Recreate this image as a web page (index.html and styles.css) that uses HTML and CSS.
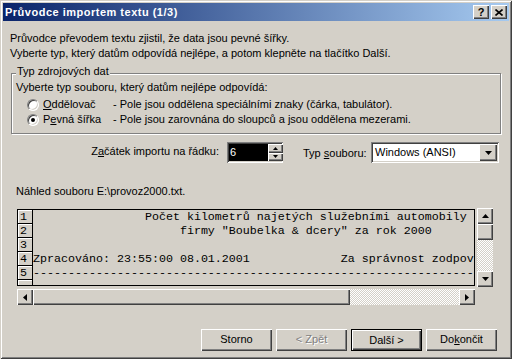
FILE: index.html
```html
<!DOCTYPE html>
<html lang="cs">
<head>
<meta charset="utf-8">
<title>Průvodce importem textu</title>
<link rel="stylesheet" href="styles.css">
</head>
<body>
<div class="window">
  <div class="titlebar">
    <span class="title">Průvodce importem textu (1/3)</span>
    <div class="tb-buttons">
      <span class="tb-btn raised">?</span>
      <span class="tb-btn raised"><svg width="8" height="7" viewBox="0 0 8 7"><path d="M0.5 0.5 L7.5 6.5 M7.5 0.5 L0.5 6.5" stroke="#000" stroke-width="1.6" fill="none"/></svg></span>
    </div>
  </div>
  <div class="content">
    <p class="intro">Průvodce převodem textu zjistil, že data jsou pevné šířky.<br>Vyberte typ, který datům odpovídá nejlépe, a potom klepněte na tlačítko Další.</p>
    <div class="group">
      <span class="legend">Typ zdrojových dat</span>
      <div class="hint">Vyberte typ souboru, který datům nejlépe odpovídá:</div>
      <div class="radio-row first">
        <span class="radio"></span>
        <span class="rlabel"><u>O</u>ddělovač</span>
        <span class="rdesc">- Pole jsou oddělena speciálními znaky (čárka, tabulátor).</span>
      </div>
      <div class="radio-row">
        <span class="radio checked"></span>
        <span class="rlabel">P<u>e</u>vná šířka</span>
        <span class="rdesc">- Pole jsou zarovnána do sloupců a jsou oddělena mezerami.</span>
      </div>
    </div>
    <div class="start-row">
      <span class="start-label">Z<u>a</u>čátek importu na řádku:</span>
      <div class="spin sunken">
        <span class="spin-edit">6</span>
        <div class="spin-btns">
          <span class="spin-btn raised"><svg width="5" height="3" viewBox="0 0 5 3"><path d="M2.5 0 L5 3 L0 3 Z" fill="#000"/></svg></span>
          <span class="spin-btn raised"><svg width="5" height="3" viewBox="0 0 5 3"><path d="M0 0 L5 0 L2.5 3 Z" fill="#000"/></svg></span>
        </div>
      </div>
      <span class="type-label">Typ <u>s</u>ouboru:</span>
      <div class="combo sunken">
        <span class="combo-val">Windows (ANSI)</span>
        <span class="combo-btn raised"><svg width="7" height="4" viewBox="0 0 7 4"><path d="M0 0 L7 0 L3.5 4 Z" fill="#000"/></svg></span>
      </div>
    </div>
    <div class="preview-label">Náhled souboru E:\provoz2000.txt.</div>
    <div class="preview">
      <div class="pv-box">
        <div class="pv-row"><span class="pv-num">1</span><span class="pv-text">                Počet kilometrů najetých služebními automobily</span></div>
        <div class="pv-row"><span class="pv-num">2</span><span class="pv-text">                     firmy "Boubelka &amp; dcery" za rok 2000</span></div>
        <div class="pv-row"><span class="pv-num">3</span><span class="pv-text"></span></div>
        <div class="pv-row"><span class="pv-num">4</span><span class="pv-text">Zpracováno: 23:55:00 08.01.2001             Za správnost zodpov</span></div>
        <div class="pv-row"><span class="pv-num">5</span><span class="pv-text">---------------------------------------------------------------</span></div>
        <div class="pv-row"><span class="pv-num"></span><span class="pv-text"></span></div>
      </div>
      <div class="vscroll">
        <span class="sb-btn raised"><svg width="7" height="4" viewBox="0 0 7 4"><path d="M3.5 0 L7 4 L0 4 Z" fill="#000"/></svg></span>
        <span class="sb-thumb-v raised"></span>
        <span class="sb-track"></span>
        <span class="sb-btn raised"><svg width="7" height="4" viewBox="0 0 7 4"><path d="M0 0 L7 0 L3.5 4 Z" fill="#000"/></svg></span>
      </div>
      <div class="hscroll">
        <span class="sb-btn raised"><svg width="4" height="7" viewBox="0 0 4 7"><path d="M0 3.5 L4 0 L4 7 Z" fill="#000"/></svg></span>
        <span class="sb-thumb-h raised"></span>
        <span class="sb-track"></span>
        <span class="sb-btn raised"><svg width="4" height="7" viewBox="0 0 4 7"><path d="M0 0 L4 3.5 L0 7 Z" fill="#000"/></svg></span>
      </div>
    </div>
    <div class="buttons">
      <span class="btn raised">Storno</span>
      <span class="btn raised disabled">&lt; Zpět</span>
      <span class="btn raised default">Další &gt;</span>
      <span class="btn raised">Do<u>k</u>ončit</span>
    </div>
  </div>
</div>
</body>
</html>
```
FILE: styles.css
```css
* { box-sizing: border-box; }
html, body { margin: 0; padding: 0; background: #d4d0c8; }
body {
  font-family: "Liberation Sans", Arial, sans-serif;
  font-size: 11px;
  color: #000;
}
u { text-decoration: underline; text-underline-offset: 1px; }

.window {
  width: 512px;
  height: 359px;
  background: #d4d0c8;
  padding: 3px;
  display: flex;
  flex-direction: column;
  box-shadow: inset 1px 1px 0 #d4d0c8, inset -1px -1px 0 #404040,
              inset 2px 2px 0 #ffffff, inset -2px -2px 0 #808080;
}

.raised {
  box-shadow: inset 1px 1px 0 #ffffff, inset -1px -1px 0 #404040,
              inset -2px -2px 0 #808080;
  background: #d4d0c8;
}
.sunken {
  box-shadow: inset 1px 1px 0 #808080, inset -1px -1px 0 #ffffff,
              inset 2px 2px 0 #404040, inset -2px -2px 0 #d4d0c8;
}

.titlebar {
  height: 18px;
  flex: none;
  display: flex;
  align-items: center;
  justify-content: space-between;
  padding: 0 2px;
  background: linear-gradient(to right, #0a246a, #a6caf0);
}
.title { color: #fff; font-weight: bold; line-height: 18px; letter-spacing: 0.5px; }
.tb-buttons { display: flex; gap: 2px; }
.tb-btn {
  width: 16px;
  height: 14px;
  display: flex;
  align-items: center;
  justify-content: center;
  font-weight: bold;
  font-size: 11px;
  line-height: 14px;
}

.content { flex: 1; }

.intro { margin: 10px 0 0 7px; line-height: 15px; }

.group {
  position: relative;
  margin: 12px 0 0 8px;
  width: 490px;
  height: 61px;
  border: 1px solid #808080;
  box-shadow: 1px 1px 0 #fff, inset 1px 1px 0 #fff;
  padding: 6px 0 0 4px;
}
.legend {
  position: absolute;
  left: 4px;
  top: -9px;
  padding: 0 1px;
  background: #d4d0c8;
  line-height: 13px;
}
.hint { line-height: 15px; }
.radio-row {
  display: flex;
  align-items: center;
  height: 15px;
  line-height: 15px;
  margin-left: 11px;
}
.radio-row.first { margin-top: 2px; }
.radio {
  width: 12px;
  height: 12px;
  flex: none;
  border-radius: 50%;
  margin-right: 4px;
  background: #fff;
  border: 1px solid;
  border-color: #808080 #ffffff #ffffff #808080;
  box-shadow: inset 1px 1px 0 #404040, inset -1px -1px 0 #d4d0c8;
  display: flex;
  align-items: center;
  justify-content: center;
}
.radio.checked::after {
  content: "";
  width: 4px;
  height: 4px;
  border-radius: 50%;
  background: #000;
}
.rlabel { width: 70px; flex: none; }

.start-row {
  display: flex;
  align-items: flex-start;
  margin: 8px 0 0 8px;
  height: 21px;
}
.start-label { width: 208px; text-align: right; margin-top: 2px; line-height: 15px; }
.spin {
  margin-left: 8px;
  width: 56px;
  height: 21px;
  padding: 2px 0 2px 2px;
  display: flex;
  background: #fff;
}
.spin-edit {
  flex: 1;
  background: #000;
  color: #fff;
  padding-left: 1px;
  line-height: 17px;
}
.spin-btns { width: 15px; display: flex; flex-direction: column; }
.spin-btn {
  flex: 1;
  display: flex;
  align-items: center;
  justify-content: center;
}
.type-label { margin-left: 20px; width: 68px; margin-top: 4px; line-height: 15px; }
.combo {
  width: 128px;
  height: 21px;
  padding: 2px;
  display: flex;
  background: #fff;
}
.combo-val { flex: 1; line-height: 17px; padding-left: 2px; }
.combo-btn {
  width: 18px;
  display: flex;
  align-items: center;
  justify-content: center;
}

.preview-label { margin: 21px 0 0 13px; line-height: 15px; }

.preview {
  display: grid;
  grid-template-columns: 458px 16px;
  grid-template-rows: 79px 16px;
  column-gap: 2px;
  row-gap: 2px;
  margin: 9px 0 0 14px;
}
.pv-box {
  margin-top: 1px;
  height: 77px;
  border: 1px solid #000;
  overflow: hidden;
  font-family: "Liberation Mono", "Courier New", monospace;
  font-size: 11.67px;
}
.pv-row { display: flex; height: 14px; line-height: 14px; }
.pv-num {
  width: 15px;
  flex: none;
  padding-left: 2px;
  border-right: 1px solid #000;
  border-bottom: 1px solid #000;
  box-shadow: inset 1px 1px 0 #fff;
}
.pv-text { white-space: pre; overflow: hidden; }

.vscroll { grid-column: 2; grid-row: 1; display: flex; flex-direction: column; }
.hscroll { grid-column: 1; grid-row: 2; display: flex; }
.sb-btn {
  width: 16px;
  height: 16px;
  flex: none;
  display: flex;
  align-items: center;
  justify-content: center;
}
.sb-thumb-v { height: 16px; flex: none; }
.sb-thumb-h { width: 317px; flex: none; }
.sb-track {
  flex: 1;
  background: repeating-conic-gradient(#ffffff 0 25%, #d4d0c8 0 50%) 0 0 / 2px 2px;
}

.buttons {
  display: flex;
  justify-content: flex-end;
  gap: 4px;
  margin: 24px 12px 0 0;
}
.btn {
  width: 71px;
  height: 22px;
  line-height: 20px;
  text-align: center;
}
.btn.default { border: 1px solid #000; }
.btn.disabled { color: #808080; text-shadow: 1px 1px 0 #fff; }
```
